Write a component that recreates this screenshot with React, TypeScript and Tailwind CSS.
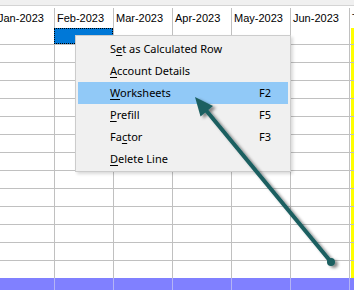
import React from "react";

const months = ["Jan-2023", "Feb-2023", "Mar-2023", "Apr-2023", "May-2023", "Jun-2023"];
const ROWS = 12;

function Column({ title, selected }: { title: string; selected?: boolean }) {
  return (
    <div className="w-[59px] shrink-0 flex flex-col border-r border-[#c0c0c0]">
      <div className="h-[37px] border-b border-[#c0c0c0] flex flex-col">
        <div className="h-[20px] flex items-center pl-[2px] text-[11px] text-black whitespace-nowrap overflow-hidden">
          {title}
        </div>
        {selected ? (
          <div className="h-[16px] ml-[-1px] border border-dotted border-black bg-[#0078d7]" />
        ) : (
          <div className="h-[16px]" />
        )}
      </div>
      {Array.from({ length: ROWS }).map((_, i) => (
        <div key={i} className="h-[18px] border-b border-[#c0c0c0]" />
      ))}
      <div className="h-[17px]" />
      <div className="flex-1 bg-[#8080ff] mr-[-1px] border-r border-[#b4b4f4]" />
    </div>
  );
}

function Item({
  pre,
  u,
  post,
  shortcut,
  active,
}: {
  pre: string;
  u: string;
  post: string;
  shortcut?: string;
  active?: boolean;
}) {
  return (
    <div className={`h-[22px] mx-[2px] flex items-center ${active ? "bg-[#91c9f7]" : ""}`}>
      <div className="w-[181px] pl-[32px] whitespace-nowrap">
        {pre}
        <span className="underline underline-offset-[2px]">{u}</span>
        {post}
      </div>
      <div>{shortcut}</div>
    </div>
  );
}

export default function App() {
  return (
    <div
      className="relative w-[354px] h-[290px] overflow-hidden bg-white"
      style={{ fontFamily: '"Liberation Sans", Arial, sans-serif' }}
    >
      <div className="h-[6px] bg-[#f0f0f0] border-b border-[#d4d4d4]" />
      <div className="h-[2px]" />
      <div className="flex h-[282px] ml-[-4px]">
        {months.map((m, i) => (
          <Column key={m} title={m} selected={i === 1} />
        ))}
        <div className="flex-1 flex flex-col">
          <div className="h-[37px] border-b border-[#c0c0c0] flex flex-col">
            <div className="h-[20px] flex items-center pl-[2px] text-[11px] text-black">T</div>
            <div className="h-[16px] ml-[1px] bg-[#ffff00]" />
          </div>
          {Array.from({ length: ROWS }).map((_, i) => (
            <div key={i} className="h-[18px] border-b border-[#c0c0c0] pl-[1px]">
              <div className="h-full bg-[#ffff00]" />
            </div>
          ))}
          <div className="h-[17px] pl-[1px]">
            <div className="h-full bg-[#ffff00]" />
          </div>
          <div className="flex-1 bg-[#8080ff]" />
        </div>
      </div>

      {/* context menu */}
      <div
        className="absolute left-[75px] top-[35px] w-[216px] h-[137px] bg-[#f0f0f0] border border-[#cccccc] shadow-[2px_2px_3px_rgba(0,0,0,0.15)] pt-[2px] text-[11px] text-black"
        style={{ fontFamily: '"Noto Sans", "Open Sans", sans-serif' }}
      >
        <Item pre="S" u="e" post="t as Calculated Row" />
        <Item pre="" u="A" post="ccount Details" />
        <Item pre="" u="W" post="orksheets" shortcut="F2" active />
        <Item pre="" u="P" post="refill" shortcut="F5" />
        <Item pre="Fa" u="c" post="tor" shortcut="F3" />
        <Item pre="" u="D" post="elete Line" />
      </div>

      {/* annotation arrow */}
      <svg className="absolute left-0 top-0 pointer-events-none" width="354" height="290" viewBox="0 0 354 290">
        <defs>
          <filter id="sh" x="-20%" y="-20%" width="140%" height="140%">
            <feDropShadow dx="3" dy="2" stdDeviation="1.8" floodColor="#000" floodOpacity="0.45" />
          </filter>
        </defs>
        <g filter="url(#sh)">
          <line x1="205" y1="109" x2="331" y2="262" stroke="#1a5f61" strokeWidth="4" strokeLinecap="round" />
          <polygon points="195,97 200.5,116.5 213,106" fill="#1a5f61" />
          <circle cx="331" cy="262" r="4" fill="#1a5f61" />
        </g>
      </svg>
    </div>
  );
}
